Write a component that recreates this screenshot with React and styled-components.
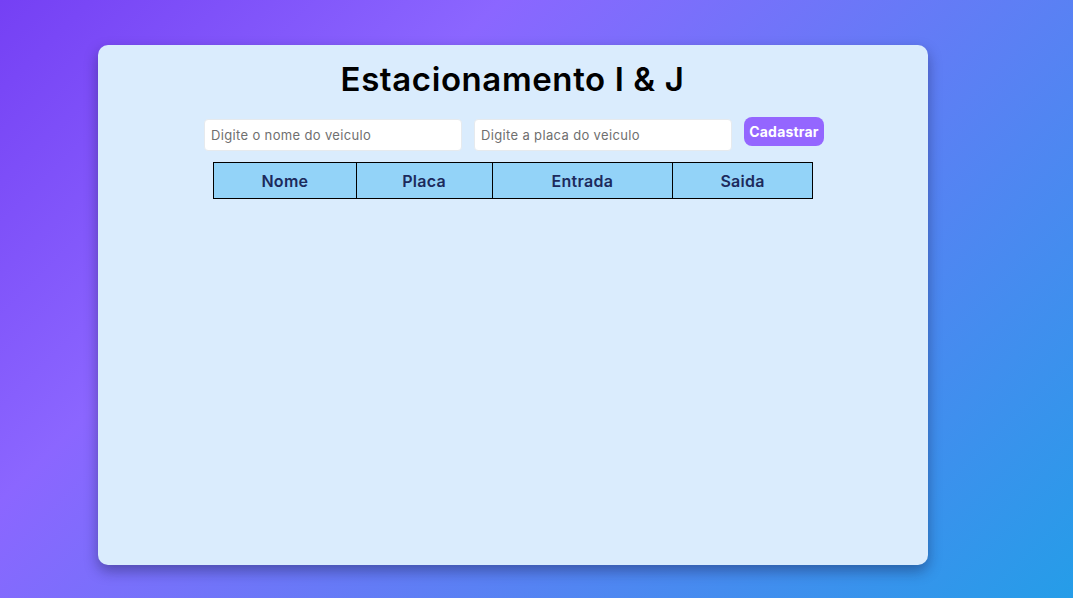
import React, { useState } from "react";
import styled, { createGlobalStyle } from "styled-components";

const GlobalStyle = createGlobalStyle`
  * {
    box-sizing: border-box;
  }
  html, body {
    margin: 0;
    padding: 0;
    height: 100%;
  }
  body {
    font-family: "Inter", "Noto Sans", "DejaVu Sans", sans-serif;
    background: linear-gradient(135deg, #7540f4 0%, #8b66ff 30%, #259de8 100%);
    background-attachment: fixed;
    min-height: 100vh;
  }
`;

const Page = styled.div`
  min-height: 100vh;
  padding: 45px 0 0 98px;
`;

const Card = styled.main`
  width: 830px;
  height: 520px;
  background-color: #daecfd;
  border-radius: 10px;
  box-shadow: 0 6px 14px rgba(20, 20, 60, 0.4);
  display: flex;
  flex-direction: column;
  align-items: center;
  padding-top: 14px;
`;

const Title = styled.h1`
  margin: 0;
  font-size: 33px;
  font-weight: 600;
  color: #000;
  letter-spacing: 0.6px;
  line-height: 40px;
  margin-left: -1px;
`;

const Form = styled.form`
  display: flex;
  align-items: flex-start;
  gap: 12px;
  margin-top: 20px;
  margin-left: 2px;
`;

const Input = styled.input`
  width: 258px;
  height: 32px;
  background-color: #fff;
  border: 1px solid #e6eaee;
  border-radius: 4px;
  padding: 0 6px;
  font-family: inherit;
  font-size: 13px;
  letter-spacing: 0.35px;
  color: #333;
  &::placeholder {
    color: #6f6f6f;
  }
  &:focus {
    outline: none;
  }
`;

const Button = styled.button`
  width: 80px;
  height: 29px;
  margin-top: -2px;
  border: none;
  border-radius: 8px;
  background-color: #9466ff;
  color: #fff;
  font-family: inherit;
  font-weight: 700;
  font-size: 14px;
  letter-spacing: 0.2px;
  padding: 0;
  cursor: pointer;
`;

const Table = styled.table`
  margin-top: 11px;
  border-collapse: collapse;
  width: 600px;
`;

const Th = styled.th`
  width: ${(p) => p.w}px;
  height: 36px;
  background-color: #93d3f8;
  border: 1px solid #000;
  color: #1c2a5c;
  font-size: 16px;
  font-weight: 600;
  letter-spacing: 0.3px;
  padding: 0;
`;

const columns = [
  { label: "Nome", w: 143 },
  { label: "Placa", w: 136 },
  { label: "Entrada", w: 181 },
  { label: "Saida", w: 140 },
];

export default function App() {
  const [nome, setNome] = useState("");
  const [placa, setPlaca] = useState("");

  const handleSubmit = (e) => {
    e.preventDefault();
  };

  return (
    <>
      <GlobalStyle />
      <Page>
        <Card>
          <Title>Estacionamento I &amp; J</Title>
          <Form onSubmit={handleSubmit}>
            <Input
              type="text"
              placeholder="Digite o nome do veiculo"
              value={nome}
              onChange={(e) => setNome(e.target.value)}
            />
            <Input
              type="text"
              placeholder="Digite a placa do veiculo"
              value={placa}
              onChange={(e) => setPlaca(e.target.value)}
            />
            <Button type="submit">Cadastrar</Button>
          </Form>
          <Table>
            <thead>
              <tr>
                {columns.map((c) => (
                  <Th key={c.label} w={c.w}>
                    {c.label}
                  </Th>
                ))}
              </tr>
            </thead>
            <tbody></tbody>
          </Table>
        </Card>
      </Page>
    </>
  );
}
